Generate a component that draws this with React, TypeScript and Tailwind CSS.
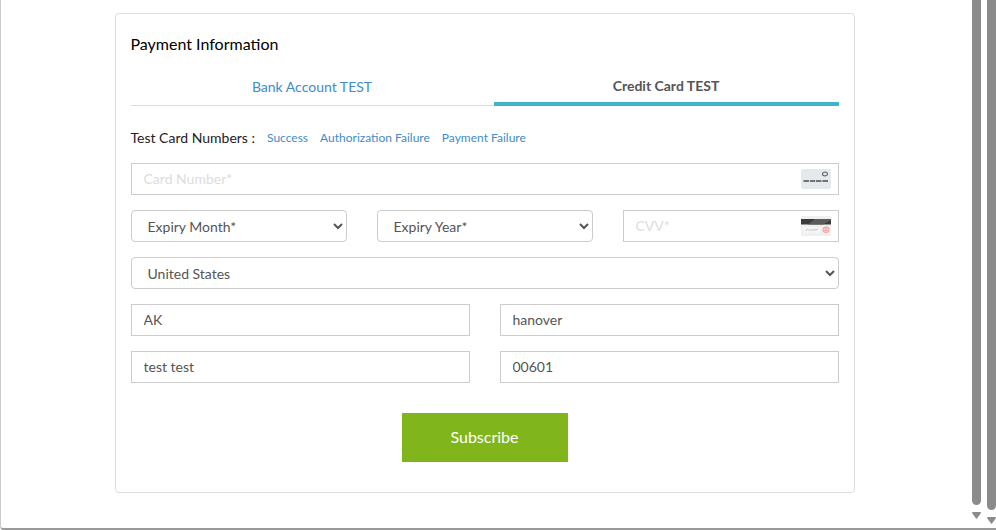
import { useState } from 'react';
import type { InputHTMLAttributes, ReactNode, SelectHTMLAttributes } from 'react';

const CardIcon = () => (
  <svg width="30" height="20" viewBox="0 0 30 20" aria-hidden="true">
    <rect width="30" height="20" rx="2" fill="#e5e9ec" />
    <ellipse cx="24" cy="5" rx="2.5" ry="1.9" fill="none" stroke="#6b6f72" strokeWidth="1.2" />
    <path d="M2.5 12h5.4M8.8 12h5.4M15 12h5.4M21.3 12h5.7" stroke="#707477" strokeWidth="2" />
  </svg>
);

const CvvIcon = () => (
  <svg width="30" height="20" viewBox="0 0 30 20" aria-hidden="true">
    <rect width="30" height="20" rx="1.5" fill="#f0f0f0" />
    <rect y="3" width="30" height="5.5" fill="#3a3a3a" />
    <path d="M14 3h16v1L22 8.5H7z" fill="#5c5c5c" />
    <rect x="2" y="11" width="17" height="6" fill="#f7f5f3" />
    <path d="M5 15c2-4 2 0 3-1s1 1 2 0 1 1 2 0 2 1 5-1" fill="none" stroke="#b5b5b5" strokeWidth="0.8" />
    <ellipse cx="25" cy="13.7" rx="3.2" ry="2.8" fill="#f5d5d5" stroke="#f69a9a" strokeWidth="1" />
    <path d="M23.5 12.8h3M23.5 14.6h3" stroke="#d99" strokeWidth="0.8" />
  </svg>
);

type FieldProps = InputHTMLAttributes<HTMLInputElement> & { icon?: ReactNode };

const Field = ({ icon, ...props }: FieldProps) => (
  <div className="relative">
    <input
      className="block h-8 w-full border border-[#ccc] bg-white px-3 pb-0.5 text-sm text-[#555] outline-none placeholder:text-[#ddd]"
      {...props}
    />
    {icon && <span className="pointer-events-none absolute inset-y-0 right-2 flex items-center">{icon}</span>}
  </div>
);

const SelectField = (props: SelectHTMLAttributes<HTMLSelectElement>) => (
  <select
    className="block h-8 w-full rounded border border-[#ccc] bg-white pl-3 text-sm text-[#555] outline-none"
    {...props}
  />
);

const Scrollbar = ({ className }: { className: string }) => (
  <div className={`flex w-[9px] flex-col items-center gap-[7px] ${className}`} aria-hidden="true">
    <div className="w-full flex-1 rounded-b-full bg-[#8b8b8b]" />
    <svg width="9" height="7" viewBox="0 0 9 7">
      <path d="M1 0h7q1 0 1 1L5 6.5q-.5.5-1 0L0 1q0-1 1-1z" fill="#8b8b8b" />
    </svg>
  </div>
);

const testNumbers = [
  { name: 'Success', number: '4111111111111111' },
  { name: 'Authorization Failure', number: '4000000000000002' },
  { name: 'Payment Failure', number: '4000000000000341' },
];

const App = () => {
  const [cardNumber, setCardNumber] = useState('');

  return (
    <div className="flex min-h-screen rounded-bl border-b-2 border-l border-b-[#999] border-l-[#ccc] bg-white font-['Lato','Liberation_Sans',sans-serif]">
      <main className="flex-1 pt-[13px] pr-5 pl-4">
        <form
          className="mx-auto max-w-[740px] rounded border border-[#ddd] px-[15px] pt-5 pb-[30px]"
          onSubmit={(e) => e.preventDefault()}
        >
          <h2 className="text-base leading-5 text-black">Payment Information</h2>

          <nav className="mt-3.5 flex h-[38px] text-center text-sm">
            <a href="#bank" className="flex grow basis-[363px] items-center justify-center border-b border-[#ddd] text-[#428bca]">
              Bank Account TEST
            </a>
            <a
              href="#card"
              aria-current="page"
              className="flex grow basis-[345px] items-center justify-center border-b-4 border-[#3fb5cb] pt-0.5 font-bold text-[#555]"
            >
              Credit Card TEST
            </a>
          </nav>

          <div className="mt-5 flex h-6 items-center gap-3">
            <span className="text-sm text-[#222]">Test Card Numbers :</span>
            {testNumbers.map((item) => (
              <button
                key={item.name}
                type="button"
                className="text-xs text-[#428bca]"
                onClick={() => setCardNumber(item.number)}
              >
                {item.name}
              </button>
            ))}
          </div>

          <div className="mt-[13px] grid gap-[15px]">
            <Field
              aria-label="Card number"
              placeholder="Card Number*"
              value={cardNumber}
              onChange={(e) => setCardNumber(e.target.value)}
              icon={<CardIcon />}
            />
            <div className="grid grid-cols-3 gap-[30px]">
              <SelectField aria-label="Expiry month">
                <option>Expiry Month*</option>
              </SelectField>
              <SelectField aria-label="Expiry year">
                <option>Expiry Year*</option>
              </SelectField>
              <Field aria-label="CVV" placeholder="CVV*" icon={<CvvIcon />} />
            </div>
            <SelectField aria-label="Country">
              <option>United States</option>
            </SelectField>
            <div className="grid grid-cols-2 gap-x-[30px] gap-y-[15px]">
              <Field aria-label="State" defaultValue="AK" />
              <Field aria-label="City" defaultValue="hanover" />
              <Field aria-label="Address" defaultValue="test test" />
              <Field aria-label="Zip code" defaultValue="00601" />
            </div>
          </div>

          <button
            type="submit"
            className="mx-auto mt-[30px] block h-[49px] min-w-[166px] bg-[#80b51c] px-10 pb-0.5 text-base text-white"
          >
            Subscribe
          </button>
        </form>
      </main>
      <div className="flex gap-[6px]">
        <Scrollbar className="pb-[9px]" />
        <Scrollbar className="pb-1" />
      </div>
    </div>
  );
};

export default App;
